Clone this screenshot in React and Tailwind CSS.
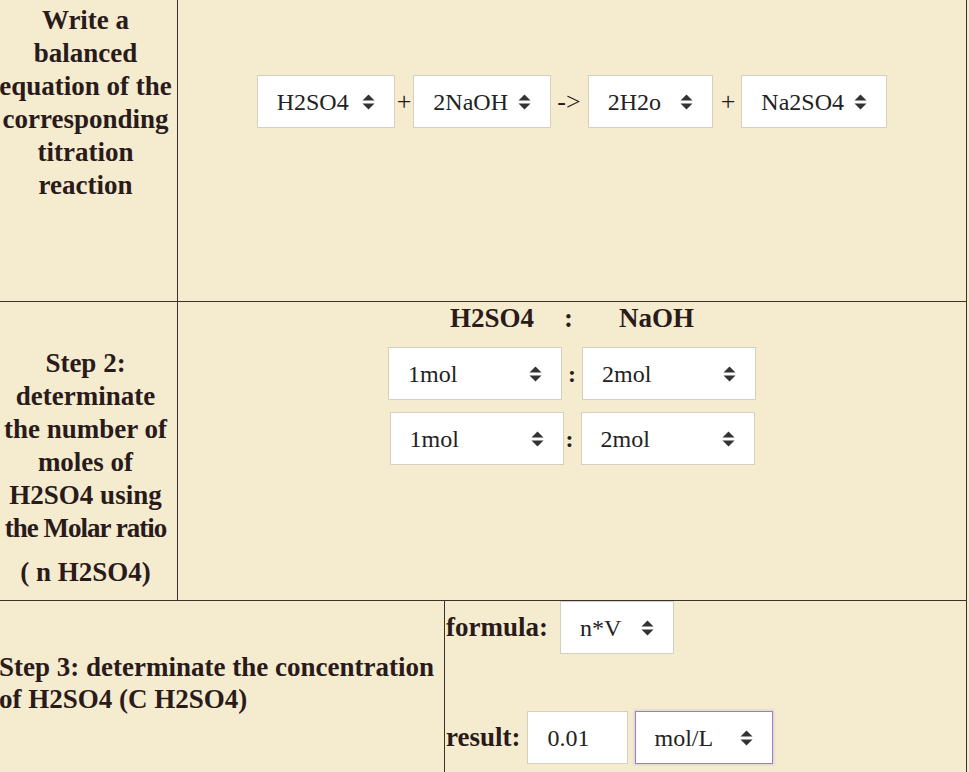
import React from 'react'

function Arrows() {
    return (
        <svg width="13" height="16" viewBox="0 0 13 16" className="shrink-0">
            <path d="M0.5 6.5 L6.5 0.5 L12.5 6.5 Z" fill="#333"/>
            <path d="M0.5 9.5 L6.5 15.5 L12.5 9.5 Z" fill="#333"/>
        </svg>
    )
}

function Select({className, children, focus}) {
    return (
        <div
            className={
                'flex items-center justify-between h-[53px] bg-white pl-[19px] pr-[19px] text-[24px] text-[#222] border ' +
                (focus ? 'border-[#8d82d4] shadow-[0_0_2px_1px_rgba(141,130,212,0.25)] ' : 'border-[#d6cfbf] ') +
                className
            }>
            <span className="whitespace-nowrap">{children}</span>
            <Arrows/>
        </div>
    )
}

export default function App() {
    return (
        <div className="h-screen overflow-hidden bg-[#f5ebcf] text-[#2a1b1b] font-['Liberation_Serif',serif]">
            <div className="-ml-[6px] w-[973px] border-r border-[#3d3229]">
                {/* step 1 */}
                <div className="grid grid-cols-[184px_1fr] h-[302px] border-b border-[#3d3229]">
                    <div className="border-r border-[#3d3229] pt-[4px] text-center font-bold text-[27px] leading-[33px]">
                        <div className="whitespace-nowrap">Write a</div>
                        <div className="whitespace-nowrap">balanced</div>
                        <div className="whitespace-nowrap">equation of the</div>
                        <div className="whitespace-nowrap">corresponding</div>
                        <div className="whitespace-nowrap">titration</div>
                        <div className="whitespace-nowrap">reaction</div>
                    </div>
                    <div className="flex justify-center items-start pt-[75px]">
                        <div className="flex items-center text-[26px]">
                            <Select className="w-[138px]">H2SO4</Select>
                            <span className="mx-[2px]">+</span>
                            <Select className="w-[138px]">2NaOH</Select>
                            <span className="ml-[6px] mr-[7px]">-&gt;</span>
                            <Select className="w-[125px]">2H2o</Select>
                            <span className="ml-[8px] mr-[6px]">+</span>
                            <Select className="w-[146px]">Na2SO4</Select>
                        </div>
                    </div>
                </div>

                {/* step 2 */}
                <div className="grid grid-cols-[184px_1fr] h-[299px] border-b border-[#3d3229]">
                    <div className="border-r border-[#3d3229] pt-[45px] text-center font-bold text-[27px] leading-[33px]">
                        <div className="whitespace-nowrap">Step 2:</div>
                        <div className="whitespace-nowrap">determinate</div>
                        <div className="whitespace-nowrap">the number of</div>
                        <div className="whitespace-nowrap">moles of</div>
                        <div className="whitespace-nowrap">H2SO4 using</div>
                        <div className="whitespace-nowrap tracking-[-1px]">the Molar ratio</div>
                        <div className="whitespace-nowrap mt-[11px]">( n H2SO4)</div>
                    </div>
                    <div className="flex flex-col items-center">
                        <div className="flex font-bold text-[27px] leading-[33px]">
                            <span>H2SO4</span>
                            <span className="ml-[30px] mr-[46px]">:</span>
                            <span>NaOH</span>
                        </div>
                        <div className="flex items-center mt-[12px]">
                            <Select className="w-[174px]">1mol</Select>
                            <span className="mx-[6px] font-bold text-[24px]">:</span>
                            <Select className="w-[174px]">2mol</Select>
                        </div>
                        <div className="flex items-center mt-[12px]">
                            <Select className="w-[174px]">1mol</Select>
                            <span className="ml-[2px] mr-[7px] font-bold text-[24px]">:</span>
                            <Select className="w-[174px]">2mol</Select>
                        </div>
                    </div>
                </div>

                {/* step 3 */}
                <div className="grid grid-cols-[451px_1fr] h-[200px]">
                    <div className="border-r border-[#3d3229] pt-[50px] pl-[5px] font-bold text-[27px] leading-[32px]">
                        <div className="whitespace-nowrap">Step 3: determinate the concentration</div>
                        <div className="whitespace-nowrap">of H2SO4 (C H2SO4)</div>
                    </div>
                    <div className="pl-[1px] flex flex-col gap-[57px]">
                        <div className="flex items-center">
                            <span className="font-bold text-[27px]">formula:</span>
                            <Select className="w-[114px] ml-[12px]">n*V</Select>
                        </div>
                        <div className="flex items-center">
                            <span className="font-bold text-[27px]">result:</span>
                            <div className="ml-[6px] w-[101px] h-[53px] flex items-center pl-[20px] bg-white border border-[#d6cfbf] text-[24px] text-[#222]">
                                0.01
                            </div>
                            <Select focus className="w-[138px] ml-[7px]">mol/L</Select>
                        </div>
                    </div>
                </div>
            </div>
        </div>
    )
}
